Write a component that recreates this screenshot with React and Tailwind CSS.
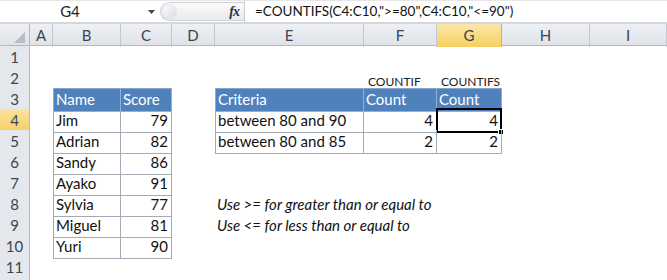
import React from 'react';

const cols = ['A', 'B', 'C', 'D', 'E', 'F', 'G', 'H', 'I'];
const gridCols = 'grid grid-cols-[30px_23px_68px_51px_43px_149px_73px_65px_88px_1fr]';

const scores = [
  ['Jim', 79],
  ['Adrian', 82],
  ['Sandy', 86],
  ['Ayako', 91],
  ['Sylvia', 77],
  ['Miguel', 81],
  ['Yuri', 90],
];

const edge = 'border-[#a4aab6]';
const hdr = 'bg-[#4f81bd] text-white';
const big = 'text-[15px] items-center';

// builds the cell map for one row: { colLetter: { text, cls } }
function rowCells(r) {
  const c = {};
  if (r === 2) {
    c.F = { text: 'COUNTIF', cls: 'text-[12px] items-end pb-[3px] pl-[4px] text-[#222]' };
    c.G = { text: 'COUNTIFS', cls: 'text-[12px] items-end pb-[3px] pl-[4px] text-[#222]' };
  }
  if (r === 3) {
    c.B = { text: 'Name', cls: `${big} ${hdr} border-l border-t border-b border-r border-l-[#a4aab6] border-t-[#8aa4c8] border-b-[#a4aab6] border-r-[#8fb0d8]` };
    c.C = { text: 'Score', cls: `${big} ${hdr} border-t border-b border-r border-t-[#8aa4c8] border-b-[#a4aab6] border-r-[#a4aab6]` };
    c.E = { text: 'Criteria', cls: `${big} ${hdr} border-l border-t border-b border-r border-l-[#a4aab6] border-t-[#8aa4c8] border-b-[#a4aab6] border-r-[#8fb0d8]` };
    c.F = { text: 'Count', cls: `${big} ${hdr} border-t border-b border-r border-t-[#8aa4c8] border-b-[#a4aab6] border-r-[#8fb0d8]` };
    c.G = { text: 'Count', cls: `${big} ${hdr} border-t border-b border-r border-t-[#8aa4c8] border-b-[#a4aab6] border-r-[#a4aab6]` };
  }
  if (r >= 4 && r <= 10) {
    const [name, score] = scores[r - 4];
    c.B = { text: name, cls: `${big} border-l border-r border-b ${edge}` };
    c.C = { text: score, cls: `${big} border-r border-b justify-end pr-[3px] ${edge}` };
  }
  if (r === 4 || r === 5) {
    const four = r === 4;
    c.E = { text: four ? 'between 80 and 90' : 'between 80 and 85', cls: `${big} border-l border-r border-b ${edge}` };
    c.F = { text: four ? 4 : 2, cls: `${big} border-r border-b justify-end pr-[3px] ${edge}` };
    c.G = { text: four ? 4 : 2, cls: `${big} border-r border-b justify-end pr-[3px] ${edge}`, selected: four };
  }
  if (r === 8) c.E = { text: 'Use >= for greater than or equal to', cls: `${big} italic whitespace-nowrap` };
  if (r === 9) c.E = { text: 'Use <= for less than or equal to', cls: `${big} italic whitespace-nowrap` };
  return c;
}

function FormulaBar() {
  return (
    <div className="flex h-[24px] items-center bg-white border-b-2 border-[#d4d7dc] border-t border-t-[#e6e6e6]">
      <div className="relative flex w-[160px] h-full items-center justify-center">
        <span className="text-[15px] text-[#222] pr-[20px]">G4</span>
        <svg className="absolute left-[148px] top-[9px]" width="7" height="4" viewBox="0 0 7 4">
          <path d="M0 0 L7 0 L3.5 4 Z" fill="#444" />
        </svg>
      </div>
      <div className="relative flex h-[19px] w-[84px] items-center justify-end rounded-l-full border border-r-0 border-[#cdd1d6] bg-gradient-to-b from-[#fbfbfb] to-[#e7e9ec] pr-[5px]">
        <div className="absolute left-[1px] top-[1px] h-[15px] w-[15px] rounded-full bg-gradient-to-br from-[#ffffff] to-[#d8dbe0] border border-[#e0e3e7]" />
        <span className="font-['Liberation_Serif',serif] italic font-bold text-[14px] text-[#333] tracking-[-1px]">fx</span>
      </div>
      <div className="h-full w-px bg-[#c9cdd3]" />
      <div className="pl-[10px] text-[13.5px] text-[#111] whitespace-nowrap">
        =COUNTIFS(C4:C10,"&gt;=80",C4:C10,"&lt;=90")
      </div>
    </div>
  );
}

function HeaderRow() {
  return (
    <div className={`${gridCols} h-[22px] bg-gradient-to-b from-[#eef0f3] to-[#dfe3e8] border-b border-[#b4bac4]`}>
      <div className="relative border-r border-[#b4bac4]">
        <svg className="absolute right-[4px] bottom-[4px]" width="11" height="11" viewBox="0 0 11 11">
          <path d="M11 0 L11 11 L0 11 Z" fill="#b9bec6" />
        </svg>
      </div>
      {cols.map((l) => (
        <div
          key={l}
          className={`flex items-center justify-center text-[15px] text-[#3a4550] border-r border-[#c3c8d0] ${
            l === 'G' ? 'bg-gradient-to-b from-[#fbe7a6] to-[#f6cf5e] border-r-[#d9b24c]' : ''
          }`}
        >
          {l}
        </div>
      ))}
    </div>
  );
}

function SheetRow({ r }) {
  const cells = rowCells(r);
  return (
    <div className={`${gridCols} h-[21px]`}>
      <div
        className={`flex items-center justify-center text-[15px] text-[#3a4550] border-r border-b border-r-[#b4bac4] border-b-[#c9ced6] ${
          r === 4 ? 'bg-gradient-to-b from-[#fbe3a0] to-[#f6cf63]' : 'bg-[#e4e7ec]'
        }`}
      >
        {r < 12 ? r : ''}
      </div>
      {cols.map((l) => {
        const cell = cells[l];
        return (
          <div
            key={l}
            className={`relative flex pl-[2px] leading-none text-[#111] ${cell ? cell.cls : ''}`}
          >
            {cell && cell.text}
            {cell && cell.selected && (
              <div className="absolute -left-px -top-px -right-[1px] -bottom-[1px] border-2 border-black">
                <div className="absolute -right-[4px] -bottom-[4px] h-[6px] w-[6px] bg-black border border-white" />
              </div>
            )}
          </div>
        );
      })}
    </div>
  );
}

export default function App() {
  const rows = [1, 2, 3, 4, 5, 6, 7, 8, 9, 10, 11, 12];
  return (
    <div className="h-[280px] w-[667px] overflow-hidden bg-white font-['Lato',sans-serif]">
      <FormulaBar />
      <HeaderRow />
      {rows.map((r) => (
        <SheetRow key={r} r={r} />
      ))}
    </div>
  );
}
